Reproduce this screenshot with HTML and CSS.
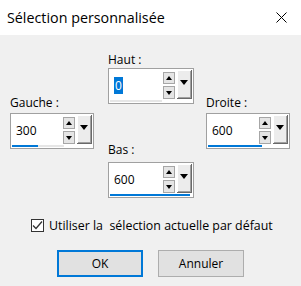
FILE: index.html
```html
<!DOCTYPE html>
<html lang="fr">
<head>
  <meta charset="UTF-8">
  <title>Sélection personnalisée</title>
  <link rel="stylesheet" href="styles.css">
</head>
<body>

<div class="titlebar">
  <span class="title">Sélection personnalisée</span>
  <svg class="close" width="11" height="11" viewBox="0 0 11 11">
    <path d="M0.5 0.5 L10.5 10.5 M10.5 0.5 L0.5 10.5" stroke="#000" stroke-width="1" fill="none"/>
  </svg>
</div>

<div class="content">
  <div class="fields">
    <div class="col side">
      <div class="label gap-3">Gauche :</div>
      <div class="spin">
        <div class="spin-row">
          <span class="value">300</span>
          <div class="arrows"><span class="up"></span><span class="down"></span></div>
          <span class="drop"></span>
        </div>
        <div class="track"><div class="bar" style="width: 26px"></div></div>
      </div>
    </div>

    <div class="col middle">
      <div class="label gap-1">Haut :</div>
      <div class="spin">
        <div class="spin-row">
          <span class="value"><span class="selected">0</span></span>
          <div class="arrows"><span class="up"></span><span class="down"></span></div>
          <span class="drop"></span>
        </div>
        <div class="track"><div class="bar" style="width: 0px"></div></div>
      </div>

      <div class="label gap-5 bas">Bas :</div>
      <div class="spin">
        <div class="spin-row">
          <span class="value">600</span>
          <div class="arrows"><span class="up"></span><span class="down"></span></div>
          <span class="drop"></span>
        </div>
        <div class="track wide"><div class="bar" style="width: 80px"></div></div>
      </div>
    </div>

    <div class="col side">
      <div class="label gap-3">Droite :</div>
      <div class="spin">
        <div class="spin-row">
          <span class="value">600</span>
          <div class="arrows"><span class="up"></span><span class="down"></span></div>
          <span class="drop"></span>
        </div>
        <div class="track"><div class="bar" style="width: 54px"></div></div>
      </div>
    </div>
  </div>

  <label class="check">
    <span class="box">
      <svg width="11" height="11" viewBox="0 0 11 11">
        <path d="M1 5.5 L4 8.5 L10 1.5" stroke="#333" stroke-width="1.3" fill="none"/>
      </svg>
    </span>
    Utiliser la&nbsp; sélection actuelle par défaut
  </label>

  <div class="buttons">
    <button class="btn default">OK</button>
    <button class="btn">Annuler</button>
  </div>
</div>

</body>
</html>
```

FILE: styles.css
```css
body {
  margin: 0;
  width: 301px;
  height: 286px;
  font-family: "Open Sans", "Noto Sans", sans-serif;
  font-size: 12px;
  color: #000;
  background-color: #f0f0f0;
  overflow: hidden;
}
.titlebar {
  height: 35px;
  background-color: #fff;
  display: flex;
  align-items: center;
  justify-content: space-between;
  padding: 0 14px 0 7px;
}
.title {
  font-size: 14.3px;
}
.content {
  padding-left: 10px;
}
.fields {
  display: flex;
}
.side {
  width: 84px;
  padding-top: 60px;
}
.middle {
  width: 86px;
  margin: 0 12px 0 14px;
  padding-top: 17px;
}
.label {
  line-height: 15px;
  height: 15px;
}
.gap-1 { margin-bottom: 1px; }
.gap-3 { margin-bottom: 3px; }
.gap-5 { margin-bottom: 5px; }
.bas {
  margin-top: 38px;
}
.spin {
  border: 1px solid #a0a0a0;
  background-color: #fff;
  padding: 1px 1px 0 1px;
  box-sizing: border-box;
  height: 36px;
}
.spin-row {
  display: flex;
  height: 29px;
}
.value {
  flex: 1;
  line-height: 15px;
  padding: 8px 0 0 4px;
}
.selected {
  background-color: #0078d7;
  color: #fff;
  padding: 0 1px;
}
.arrows {
  display: flex;
  flex-direction: column;
  gap: 2px;
  padding-top: 2px;
  margin-right: 2px;
}
.up, .down {
  width: 12px;
  height: 12px;
  box-sizing: border-box;
  border: 1px solid #a6a6a6;
  background-color: #e5e5e5;
  position: relative;
}
.down {
  height: 13px;
}
.up::after, .down::after {
  content: "";
  position: absolute;
  left: 2px;
  border-left: 3px solid transparent;
  border-right: 3px solid transparent;
}
.up::after {
  top: 3px;
  border-bottom: 4px solid #000;
}
.down::after {
  top: 4px;
  border-top: 4px solid #000;
}
.drop {
  width: 15px;
  box-sizing: border-box;
  background-color: #ececec;
  border-right: 1px solid #696969;
  border-bottom: 1px solid #696969;
  box-shadow: inset 1px 1px #fff, inset -1px -1px #a0a0a0;
  position: relative;
}
.drop::after {
  content: "";
  position: absolute;
  left: 3px;
  top: 10px;
  border-left: 4px solid transparent;
  border-right: 4px solid transparent;
  border-top: 5px solid #000;
}
.track {
  width: 52px;
  height: 2px;
  margin-top: 1px;
  background-color: #e6e6e6;
}
.track.wide {
  width: 80px;
}
.bar {
  height: 100%;
  background-color: #0078d7;
}
.check {
  display: flex;
  align-items: center;
  height: 15px;
  line-height: 15px;
  font-size: 12.4px;
  margin: 20px 0 0 21px;
}
.box {
  width: 13px;
  height: 13px;
  box-sizing: border-box;
  border: 1px solid #333;
  background-color: #fff;
  margin-right: 5px;
  display: flex;
  align-items: center;
  justify-content: center;
}
.buttons {
  display: flex;
  gap: 15px;
  margin: 17px 0 0 47px;
}
.btn {
  width: 86px;
  height: 27px;
  font-family: inherit;
  font-size: 12px;
  color: #000;
  background-color: #e1e1e1;
  border: 1px solid #adadad;
  padding: 0;
}
.btn.default {
  border: 2px solid #0078d7;
}
```
